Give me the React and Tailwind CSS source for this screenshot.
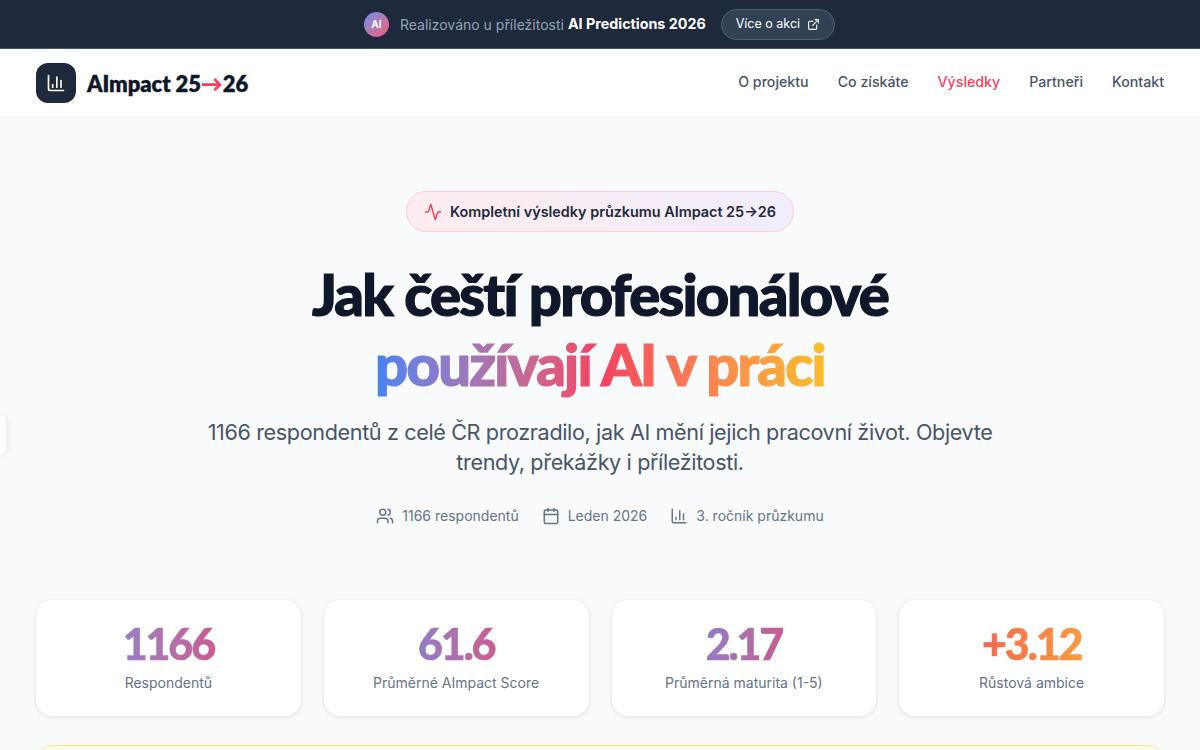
import React from "react";
import { Activity, BarChart3, Calendar, ExternalLink, Users } from "lucide-react";

const navItems = ["O projektu", "Co získáte", "Výsledky", "Partneři", "Kontakt"];

const stats = [
  { value: "1166", label: "Respondentů", color: "bg-gradient-to-r from-[#9580c8] to-[#ca5a8e]" },
  { value: "61.6", label: "Průměrné AImpact Score", color: "bg-gradient-to-r from-[#8b7ec9] to-[#cb5a8d]" },
  { value: "2.17", label: "Průměrná maturita (1-5)", color: "bg-gradient-to-r from-[#8f7dc6] to-[#c45b8f]" },
  { value: "+3.12", label: "Růstová ambice", color: "bg-gradient-to-r from-[#f3654f] to-[#fd9a3b]" },
];

const body = "font-['Inter','Noto_Sans',sans-serif]";
const display = "font-['Lato','Inter',sans-serif]";

export default function App() {
  return (
    <div className={`relative h-[750px] overflow-hidden bg-[#f8fafc] ${body}`}>
      {/* promo bar */}
      <div className="flex h-[49px] items-center justify-center border-b border-[#475569] bg-[#1e293b] pr-[1px]">
        <span className="grid h-[25px] w-[25px] place-items-center rounded-full bg-gradient-to-br from-[#5b8def] to-[#f0506e] text-[10px] font-bold text-white">
          AI
        </span>
        <span className="ml-[11px] text-[14px] text-[#94a3b8]">Realizováno u příležitosti</span>
        <strong className="ml-[4px] text-[14.3px] font-bold text-white">AI Predictions 2026</strong>
        <a className="ml-[15px] flex h-[31px] items-center gap-[7px] rounded-full border border-[#52607a] bg-[#334155] px-[14px] text-[12.5px] font-normal text-white">
          Více o akci <ExternalLink size={13} />
        </a>
      </div>

      {/* nav */}
      <header className="flex h-[69px] items-center justify-between border-b border-[#f1f5f9] bg-white px-[36px]">
        <div className="flex items-center gap-[11px]">
          <div className="grid h-[40px] w-[40px] place-items-center rounded-[12px] bg-[#1e293b] text-white">
            <BarChart3 size={20} strokeWidth={2} />
          </div>
          <span className={`flex items-center text-[22px] font-extrabold tracking-[-0.1px] text-[#0f172a] [-webkit-text-stroke:0.3px_#0f172a] ${display}`}>
            AImpact 25<span className="text-[#f43f5e] [-webkit-text-stroke:0]">→</span>26
          </span>
        </div>
        <nav className="flex gap-[29px] pb-[2px] text-[14.2px] font-medium text-[#475569]">
          {navItems.map((item) => (
            <a key={item} className={item === "Výsledky" ? "text-[#f43f5e]" : ""}>
              {item}
            </a>
          ))}
        </nav>
      </header>

      {/* hero */}
      <section className="flex flex-col items-center pt-[73px]">
        <div className="flex h-[41px] w-[388px] items-center justify-center gap-[8px] rounded-full border border-[#fecdd3] bg-gradient-to-r from-[#fdecef] to-[#f1edfb] text-[14.4px] font-semibold text-[#1e293b]">
          <Activity size={18} className="text-[#f43f5e]" />
          Kompletní výsledky průzkumu AImpact 25→26
        </div>
        <h1 className={`mt-[27px] text-center text-[58px] font-black leading-[70px] tracking-[-0.03em] text-[#0f172a] [-webkit-text-stroke:1.2px_#0f172a] ${display}`}>
          Jak čeští profesionálové
          <br />
          <span className="bg-gradient-to-r from-[#3b82f6] via-[#f43f5e] to-[#fbbf24] bg-clip-text px-[4px] text-transparent [-webkit-text-stroke:1.2px_transparent]">
            používají AI v práci
          </span>
        </h1>
        <p className="mt-[18px] max-w-[800px] text-center text-[21.6px] leading-[30px] tracking-[-0.37px] text-[#475569]">
          1166 respondentů z celé ČR prozradilo, jak AI mění jejich pracovní život. Objevte trendy, překážky i příležitosti.
        </p>
        <div className="mt-[28px] flex gap-[23px] text-[14px] text-[#64748b]">
          <span className="flex items-center gap-[8px]">
            <Users size={18} /> 1166 respondentů
          </span>
          <span className="flex items-center gap-[8px]">
            <Calendar size={18} /> Leden 2026
          </span>
          <span className="flex items-center gap-[8px]">
            <BarChart3 size={18} /> 3. ročník průzkumu
          </span>
        </div>
      </section>

      {/* stats */}
      <section className="mt-[74px] grid grid-cols-4 gap-[23px] px-[36px]">
        {stats.map((s) => (
          <div
            key={s.label}
            className="flex h-[116px] flex-col items-center rounded-[16px] bg-white pt-[17px] shadow-[0_1px_4px_rgba(15,23,42,0.12)]"
          >
            <strong className={`bg-clip-text px-[3px] text-[43px] font-black leading-[54px] tracking-[-0.05em] text-transparent [-webkit-text-stroke:0.6px_transparent] ${s.color} ${display}`}>
              {s.value}
            </strong>
            <span className="mt-[1px] text-[14px] text-[#64748b]">{s.label}</span>
          </div>
        ))}
      </section>

      <div className="mx-[36px] mt-[29px] h-[40px] rounded-[16px] border border-[#fde68a] bg-[#fffbeb]" />

      {/* side tab */}
      <div className="absolute left-0 top-[415px] h-[40px] w-[6px] rounded-r-[8px] bg-white shadow-[0_1px_6px_rgba(15,23,42,0.12)]" />
    </div>
  );
}
